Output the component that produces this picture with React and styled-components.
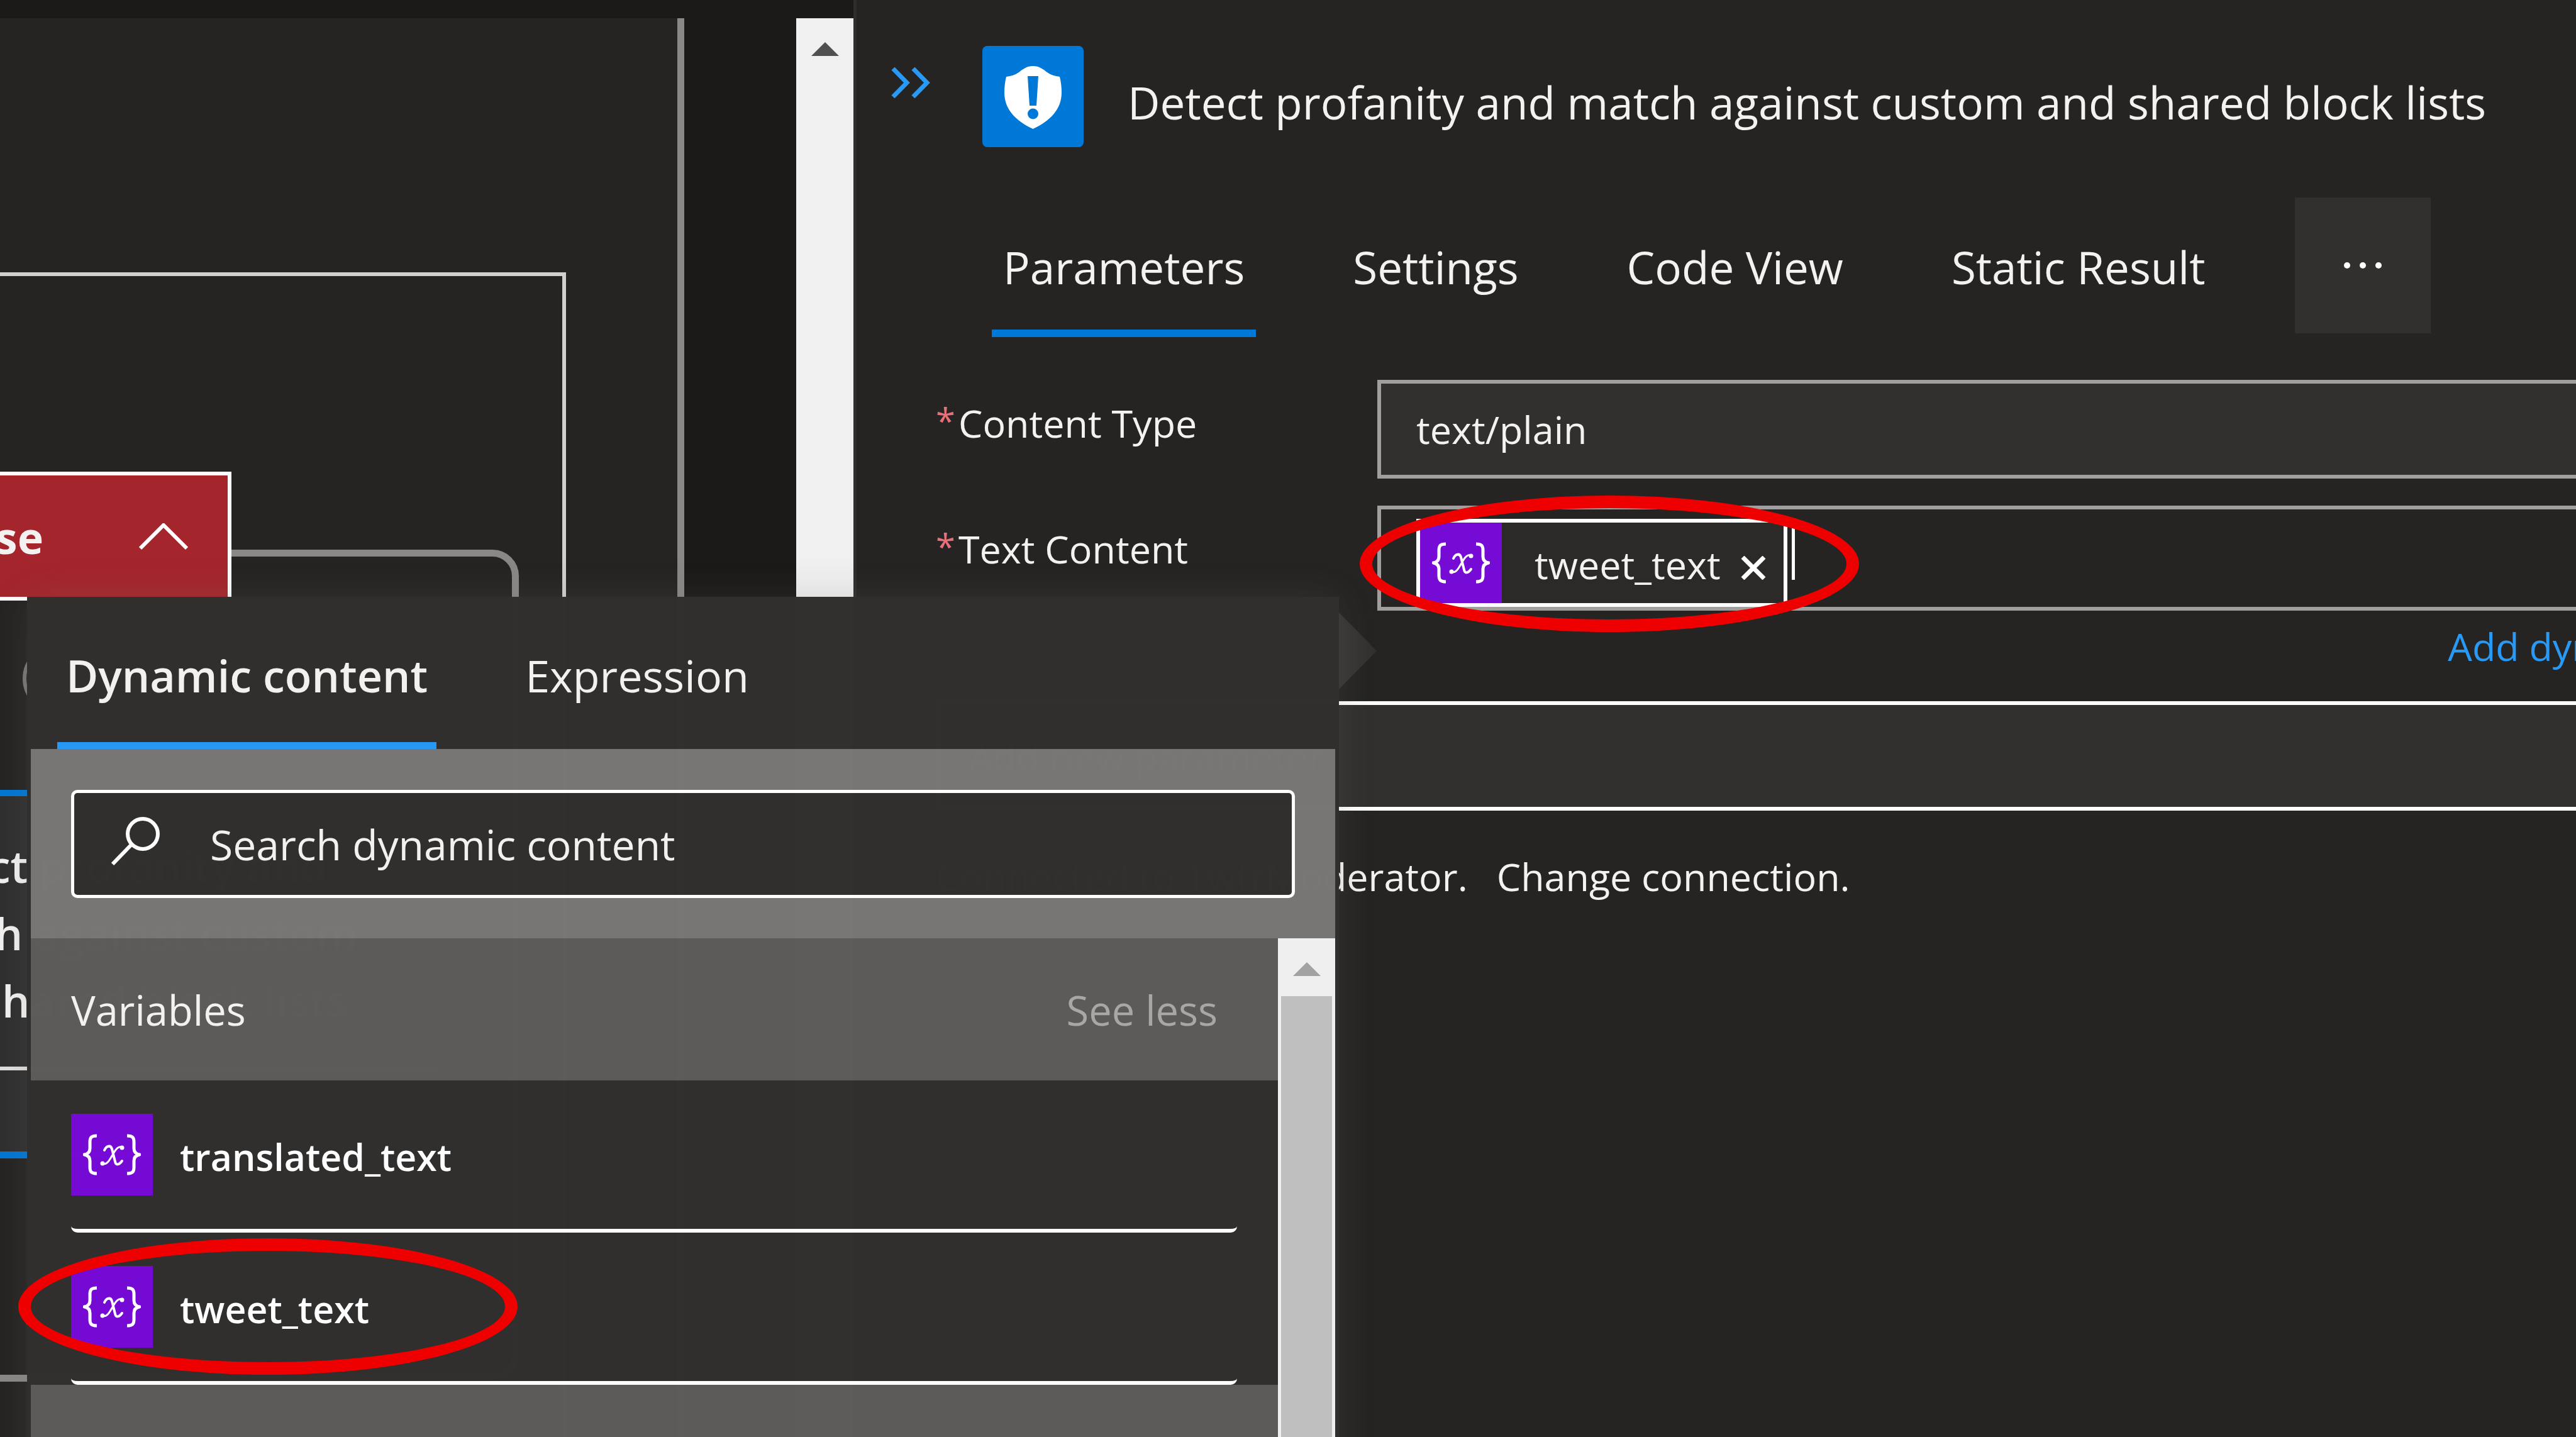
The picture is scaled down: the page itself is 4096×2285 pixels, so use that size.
import React from "react";
import styled, { createGlobalStyle } from "styled-components";

const color = {
  canvasEdge: "#1b1a18",
  surface: "#252423",
  raised: "#31302e",
  text: "#f3f2f1",
  accent: "#2899f5",
  brand: "#0078d7",
  variable: "#770bd6",
  mark: "#ef0000",
};

const GlobalStyle = createGlobalStyle`
  * { box-sizing: border-box; }
  body {
    margin: 0;
    overflow: hidden;
    background: ${color.surface};
    color: ${color.text};
    font-family: "Open Sans", "Noto Sans", sans-serif;
    font-size: 61px;
  }
  button, input, select { font: inherit; color: inherit; }
  svg { display: block; }
`;

const Page = styled.div`
  position: relative;
  display: flex;
  height: 100vh;
  overflow: hidden;
`;

/* ---------- Workflow canvas ---------- */

const CanvasPane = styled.section`
  flex: 0 0 1357px;
  display: flex;
  justify-content: space-between;
  padding-top: 29px;
  background: ${color.canvasEdge};
`;

const Canvas = styled.div`
  position: relative;
  width: 1088px;
  background: ${color.surface};
  border-right: 11px solid #8a8886;
  overflow: hidden;
`;

const ScopeFrame = styled.div`
  position: absolute;
  left: -20px;
  top: 404px;
  width: 920px;
  height: 2400px;
  border: 6px solid #d2d0ce;
`;

const BranchFrame = styled.div`
  position: absolute;
  left: -60px;
  top: 845px;
  width: 885px;
  height: 1323px;
  border: 11px solid #8a8886;
  border-radius: 42px;
`;

const BranchHeader = styled.button`
  position: absolute;
  left: -400px;
  top: 721px;
  width: 768px;
  height: 205px;
  display: flex;
  align-items: center;
  justify-content: flex-end;
  gap: 152px;
  padding: 2px 63px 0 0;
  background: #a4262c;
  border: 6px solid #ffffff;
  font-size: 70px;
  font-weight: 700;
`;

const AddNode = styled.span`
  position: absolute;
  left: 36px;
  top: ${(p) => p.$top}px;
  width: 110px;
  height: 110px;
  border: 6px solid #797775;
  border-radius: 50%;
`;

const ActionCard = styled.article`
  position: absolute;
  left: -400px;
  top: 1227px;
  width: 1100px;
  height: 586px;
  padding-top: 58px;
  background: #2f2f2f;
  border-top: 10px solid ${color.brand};
  border-bottom: 11px solid ${color.brand};
  font-size: 70px;
  font-weight: 600;
  line-height: 107px;
`;

const ActionTitle = styled.div`
  height: 378px;
  padding-left: 222px;
  border-bottom: 6px solid #e1dfdd;
`;

const CanvasScroll = styled.div`
  display: flex;
  justify-content: center;
  width: 91px;
  padding-top: 38px;
  background: #f0f0f0;
`;

/* ---------- Settings panel ---------- */

const Panel = styled.main`
  flex: 1;
  min-width: 0;
  padding-left: 55px;
  border-left: 5px solid #2f2e2d;
  overflow: hidden;
`;

const PanelHeader = styled.header`
  display: flex;
  align-items: flex-start;
  padding-top: 73px;
`;

const PlainButton = styled.button`
  padding: 0;
  border: 0;
  background: none;
  display: flex;
  align-items: center;
  justify-content: center;
`;

const CollapseButton = styled(PlainButton)`
  margin: 34px 83px 0 0;
`;

const Title = styled.h1`
  margin: 42px 0 0 70px;
  font-size: 71px;
  font-weight: 400;
  line-height: 96px;
  white-space: nowrap;
`;

const TabBar = styled.nav`
  display: flex;
  gap: 136px;
  margin: 80px 0 0 160px;
`;

const Tab = styled.button`
  padding: 12px 18px 0;
  border: 0;
  border-bottom: 12px solid ${(p) => (p.$active ? color.brand : "transparent")};
  background: none;
  font-size: 71px;
  line-height: 198px;
  white-space: nowrap;
`;

const MoreButton = styled(PlainButton)`
  width: 216px;
  height: 216px;
  margin-left: -12px;
  background: ${color.raised};
`;

const Form = styled.form`
  display: grid;
  grid-template-columns: 702px 1fr;
  row-gap: 43px;
  margin: 68px -400px 0 71px;
`;

const Label = styled.label`
  display: flex;
  line-height: 138px;
`;

const Required = styled.span`
  width: 36px;
  font-size: 56px;
  line-height: 128px;
  color: #e8707a;
`;

const TextInput = styled.input`
  min-width: 0;
  height: 157px;
  padding: 0 56px;
  border: 6px solid #a19f9d;
  border-radius: 0;
  background: ${color.raised};
  outline: none;
`;

const TokenField = styled.div`
  position: relative;
  display: flex;
  align-items: flex-end;
  gap: 7px;
  height: 167px;
  padding: 0 56px;
  border: 6px solid #a19f9d;
  outline: none;
`;

const Token = styled.span`
  display: flex;
  align-items: center;
  height: 140px;
  padding-right: 28px;
  border: 6px solid #ffffff;
  background: #2b2a29;
  line-height: 128px;
`;

const TokenName = styled.span`
  margin: 6px 32px 0 52px;
`;

const Caret = styled.span`
  width: 5px;
  height: 84px;
  margin-bottom: 43px;
  background: #ffffff;
`;

const VariableBadge = styled.span`
  flex: none;
  display: flex;
  align-items: center;
  justify-content: center;
  width: 130px;
  height: ${(p) => p.$height}px;
  background: ${color.variable};
`;

const RemoveButton = styled(PlainButton)`
  padding-top: 16px;
`;

const AddDynamicRow = styled.div`
  grid-column: 2;
  margin-top: -43px;
  line-height: 114px;
  text-align: right;
`;

const AccentLink = styled.a`
  color: ${color.accent};
  text-decoration: none;
`;

const ParameterSelect = styled.select`
  grid-column: 1 / -1;
  height: 174px;
  margin-top: -13px;
  padding: 0 46px;
  border: 6px solid #ffffff;
  background: ${color.raised};
  appearance: none;
`;

const Connection = styled.p`
  display: flex;
  gap: 46px;
  margin: 57px 0 0 71px;
  line-height: 96px;
`;

const TextLink = styled.a`
  color: inherit;
  text-decoration: none;
`;

const Ring = styled.span`
  position: absolute;
  z-index: 3;
  left: ${(p) => p.$left}px;
  top: ${(p) => p.$top}px;
  width: 794px;
  height: 217px;
  border: 20px solid ${color.mark};
  border-radius: 50%;
  pointer-events: none;
`;

/* ---------- Dynamic content popover ---------- */

const Popover = styled.aside`
  position: absolute;
  left: 43px;
  top: 949px;
  width: 2086px;
  height: 1600px;
  display: flex;
  flex-direction: column;
  padding: 0 6px;
  background: ${color.raised};
  box-shadow: 0 0 60px rgba(118, 116, 114, 0.22);
  opacity: 0.997;
`;

const PopoverArrow = styled.svg`
  position: absolute;
  left: 100%;
  top: 25px;
`;

const PopoverTabs = styled.nav`
  display: flex;
  gap: 127px;
  padding-left: 42px;
`;

const PopoverTab = styled.button`
  padding: 20px 14px 0;
  border: 0;
  border-bottom: 11px solid ${(p) => (p.$active ? color.accent : "transparent")};
  background: none;
  font-size: 70px;
  font-weight: ${(p) => (p.$active ? 600 : 400)};
  line-height: 211px;
  white-space: nowrap;
`;

const SearchArea = styled.div`
  padding: 65px 64px 64px;
  background: #797775;
`;

const SearchBox = styled.label`
  display: flex;
  align-items: center;
  gap: 80px;
  height: 172px;
  padding: 0 0 8px 58px;
  border: 5px solid #ffffff;
  border-radius: 10px;
  background: ${color.raised};
`;

const SearchInput = styled.input`
  flex: 1;
  border: 0;
  padding: 8px 0 0;
  background: none;
  outline: none;
  font-size: 66px;
  &::placeholder { color: ${color.text}; opacity: 1; }
`;

const ListArea = styled.div`
  flex: 1;
  display: flex;
`;

const List = styled.div`
  flex: 1;
`;

const SectionHeader = styled.div`
  display: flex;
  align-items: center;
  justify-content: space-between;
  height: 226px;
  padding: 2px 96px 0 64px;
  background: #5d5c5a;
  font-size: 65px;
`;

const SeeLess = styled(PlainButton)`
  color: #a9a8a6;
`;

const Items = styled.ul`
  margin: 0;
  padding: 0 65px 0 64px;
  list-style: none;
`;

const Item = styled.li`
  position: relative;
`;

const ItemButton = styled.button`
  display: flex;
  align-items: center;
  gap: 43px;
  width: 100%;
  height: 242px;
  padding: 0;
  border: 0 solid #ffffff;
  border-bottom-width: 6px;
  border-radius: 10px;
  background: none;
  font-size: 59px;
  font-weight: 600;
  color: #ffffff;
`;

const ItemName = styled.span`
  padding-top: 5px;
`;

const ListScroll = styled.div`
  display: flex;
  flex-direction: column;
  align-items: center;
  gap: 32px;
  width: 91px;
  padding-top: 38px;
  background: #f0f0f0;
`;

const Thumb = styled.div`
  flex: 1;
  width: 81px;
  background: #c0c0c0;
`;

/* ---------- Icons ---------- */

const ScrollArrow = ({ fill }) => (
  <svg width="44" height="22" viewBox="0 0 44 22" aria-hidden="true">
    <path d="M22 0 44 22H0z" fill={fill} />
  </svg>
);

const ChevronUp = () => (
  <svg width="78" height="44" viewBox="0 0 78 44" aria-hidden="true">
    <path d="M2 40 39 3l37 37" fill="none" stroke="#fff" strokeWidth="6" />
  </svg>
);

const DoubleChevron = () => (
  <svg width="62" height="49" viewBox="0 0 62 49" aria-hidden="true">
    <path d="M3 2 25 24.500 3 47M35 2l22 22.500L35 47" fill="none" stroke={color.accent} strokeWidth="7" />
  </svg>
);

const ShieldIcon = () => (
  <svg width="161" height="161" viewBox="0 0 161 161" aria-hidden="true">
    <rect width="161" height="161" rx="8" fill={color.brand} />
    <path
      d="M80.500 32C90 32 97 37 103 42c6 4 12 6 20 7 2 8 3 16 3 25 0 27-18 45-45.500 58C53 119 35 101 35 74c0-9 1-17 3-25 8-1 14-3 20-7 6-5 13-10 22.500-10z"
      fill="#fff"
    />
    <path d="M72 48h17l-3 47H75z" fill={color.brand} />
    <circle cx="80.500" cy="108" r="8.500" fill={color.brand} />
  </svg>
);

const MoreDots = () => (
  <svg width="62" height="12" viewBox="0 0 62 12" aria-hidden="true">
    <circle cx="6" cy="6" r="5" fill="#fff" />
    <circle cx="31" cy="6" r="5" fill="#fff" />
    <circle cx="56" cy="6" r="5" fill="#fff" />
  </svg>
);

const SearchIcon = () => (
  <svg width="78" height="78" viewBox="0 0 78 78" aria-hidden="true">
    <g fill="none" stroke="#fff" strokeWidth="6">
      <circle cx="51" cy="27" r="24" />
      <path d="M33 44 3 75" />
    </g>
  </svg>
);

const CloseIcon = () => (
  <svg width="40" height="38" viewBox="0 0 40 38" aria-hidden="true">
    <path d="M3 2l34 34M37 2 3 36" stroke="#fff" strokeWidth="7" />
  </svg>
);

const VariableIcon = ({ height = 130 }) => (
  <VariableBadge $height={height}>
    <svg width="92" height="66" viewBox="0 0 92 66" aria-hidden="true">
      <g fill="none" stroke="#fff" strokeLinejoin="round">
        <path
          d="M22 3C13 3 11 6 11 13v10c0 6-3 9-9 10 6 1 9 4 9 10v10c0 7 2 10 11 10"
          strokeWidth="5"
        />
        <path
          d="M70 3c9 0 11 3 11 10v10c0 6 3 9 9 10-6 1-9 4-9 10v10c0 7-2 10-11 10"
          strokeWidth="5"
        />
        <path d="M34 26c3-7 10-9 12-2l5 20c1 6 6 6 11-1" strokeLinecap="round" strokeWidth="4" />
        <path d="M62 21c-5-2-9 2-13 9l-6 10c-4 7-8 9-12 7" strokeLinecap="round" strokeWidth="3" />
      </g>
      <circle cx="62" cy="22" r="3.500" fill="#fff" />
      <circle cx="31" cy="47" r="3.500" fill="#fff" />
    </svg>
  </VariableBadge>
);

/* ---------- Page ---------- */

const panelTabs = ["Parameters", "Settings", "Code View", "Static Result"];
const variables = [
  { name: "translated_text", marked: false },
  { name: "tweet_text", marked: true },
];

export default function App() {
  return (
    <>
      <GlobalStyle />
      <Page>
        <CanvasPane>
          <Canvas>
            <ScopeFrame />
            <BranchFrame />
            <BranchHeader type="button">
              <span>False</span>
              <ChevronUp />
            </BranchHeader>
            <AddNode $top={995} />
            <ActionCard>
              <ActionTitle>
                Detect profanity and
                <br />
                match against custom
                <br />
                and shared block lists
              </ActionTitle>
            </ActionCard>
            <AddNode $top={1996} />
          </Canvas>
          <CanvasScroll>
            <ScrollArrow fill="#505050" />
          </CanvasScroll>
        </CanvasPane>

        <Panel>
          <PanelHeader>
            <CollapseButton type="button" aria-label="Collapse panel">
              <DoubleChevron />
            </CollapseButton>
            <ShieldIcon />
            <Title>Detect profanity and match against custom and shared block lists</Title>
          </PanelHeader>

          <TabBar>
            {panelTabs.map((name, i) => (
              <Tab key={name} type="button" $active={i === 0}>
                {name}
              </Tab>
            ))}
            <MoreButton type="button" aria-label="More commands">
              <MoreDots />
            </MoreButton>
          </TabBar>

          <Form>
            <Label htmlFor="content-type">
              <Required>*</Required>Content Type
            </Label>
            <TextInput id="content-type" defaultValue="text/plain" />

            <Label as="span" id="text-content-label">
              <Required>*</Required>Text Content
            </Label>
            <TokenField role="textbox" aria-labelledby="text-content-label" tabIndex={0}>
              <Token>
                <VariableIcon height={128} />
                <TokenName>tweet_text</TokenName>
                <RemoveButton type="button" aria-label="Remove tweet_text">
                  <CloseIcon />
                </RemoveButton>
              </Token>
              <Caret />
              <Ring $left={-34} $top={-22} />
            </TokenField>

            <AddDynamicRow>
              <AccentLink href="#dynamic">Add dynamic content</AccentLink>
            </AddDynamicRow>

            <ParameterSelect aria-label="Add new parameter">
              <option>Add new parameter</option>
            </ParameterSelect>
          </Form>

          <Connection>
            <span>Connected to TwtrModerator.</span>
            <TextLink href="#connection">Change connection.</TextLink>
          </Connection>
        </Panel>

        <Popover>
          <PopoverArrow width="60" height="122" viewBox="0 0 60 122" aria-hidden="true">
            <defs>
              <linearGradient id="arrow-fade">
                <stop offset="0" stopColor="#3d3c3b" />
                <stop offset="1" stopColor="#31302e" />
              </linearGradient>
            </defs>
            <path d="M0 0 60 61 0 122z" fill="url(#arrow-fade)" />
          </PopoverArrow>
          <PopoverTabs>
            <PopoverTab type="button" $active>
              Dynamic content
            </PopoverTab>
            <PopoverTab type="button">Expression</PopoverTab>
          </PopoverTabs>
          <SearchArea>
            <SearchBox>
              <SearchIcon />
              <SearchInput type="text" aria-label="Search dynamic content" placeholder="Search dynamic content" />
            </SearchBox>
          </SearchArea>
          <ListArea>
            <List>
              <SectionHeader>
                <span>Variables</span>
                <SeeLess type="button">See less</SeeLess>
              </SectionHeader>
              <Items>
                {variables.map((v) => (
                  <Item key={v.name}>
                    <ItemButton type="button">
                      <VariableIcon />
                      <ItemName>{v.name}</ItemName>
                    </ItemButton>
                    {v.marked && <Ring $left={-84} $top={9} />}
                  </Item>
                ))}
              </Items>
              <SectionHeader />
            </List>
            <ListScroll>
              <ScrollArrow fill="#a3a3a3" />
              <Thumb />
            </ListScroll>
          </ListArea>
        </Popover>
      </Page>
    </>
  );
}
